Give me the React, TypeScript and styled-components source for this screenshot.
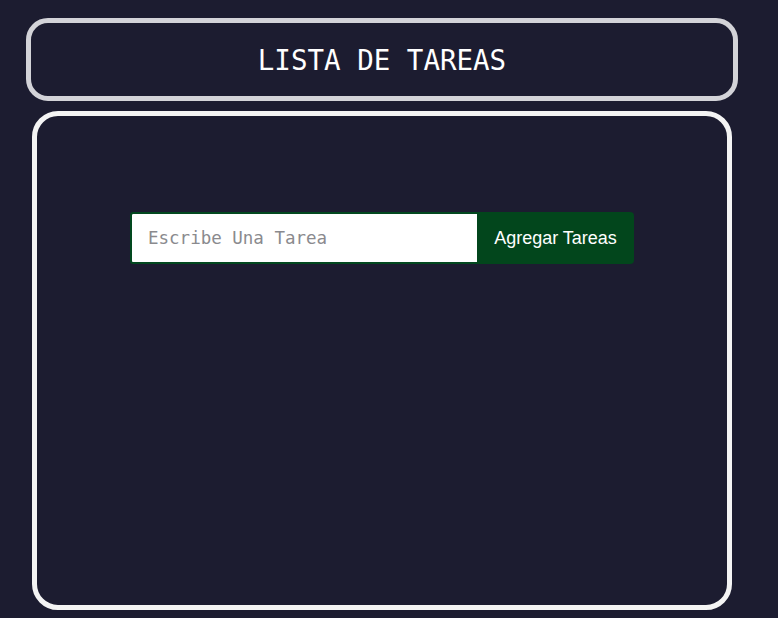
import React from "react";
import styled, { createGlobalStyle } from "styled-components";

const Global = createGlobalStyle`
  html, body {
    margin: 0;
    padding: 0;
    background: #1c1c30;
  }
  body {
    font-family: "Liberation Sans", Arial, sans-serif;
  }
`;

const Page = styled.div`
  display: flex;
  flex-direction: column;
  align-items: flex-start;
  padding: 18px 0 8px 26px;
  gap: 10px;
  box-sizing: border-box;
  height: 618px;
`;

const Header = styled.header`
  box-sizing: border-box;
  width: 712px;
  height: 83px;
  border: 5px solid #d3d3d8;
  border-radius: 22px;
  display: flex;
  align-items: center;
  justify-content: center;
`;

const Title = styled.h1`
  margin: 0;
  font-family: "DejaVu Sans Mono", monospace;
  font-weight: normal;
  font-size: 27.5px;
  color: #ffffff;
`;

const Main = styled.main`
  box-sizing: border-box;
  margin-left: 6px;
  width: 700px;
  height: 499px;
  border: 5px solid #f4f4f4;
  border-radius: 26px;
  display: flex;
  flex-direction: column;
  align-items: center;
  padding-top: 96px;
`;

const Form = styled.form`
  display: flex;
  align-items: stretch;
  height: 52px;
`;

const Input = styled.input`
  box-sizing: border-box;
  width: 347px;
  height: 52px;
  border: 2px solid #02481f;
  border-right: none;
  border-radius: 3px 0 0 3px;
  background: #ffffff;
  padding: 0 0 0 16px;
  font-family: "DejaVu Sans Mono", monospace;
  font-size: 17.5px;
  outline: none;
  &::placeholder {
    color: #8a8a8e;
  }
`;

const Button = styled.button`
  box-sizing: border-box;
  width: 157px;
  height: 52px;
  border: none;
  border-radius: 0 4px 4px 0;
  background: #02461c;
  color: #ffffff;
  font-family: "Liberation Sans", Arial, sans-serif;
  font-size: 18px;
  padding: 0;
  cursor: pointer;
`;

export default function App() {
  return (
    <>
      <Global />
      <Page>
        <Header>
          <Title>LISTA DE TAREAS</Title>
        </Header>
        <Main>
          <Form onSubmit={(e) => e.preventDefault()}>
            <Input placeholder="Escribe Una Tarea" />
            <Button type="submit">Agregar Tareas</Button>
          </Form>
        </Main>
      </Page>
    </>
  );
}
